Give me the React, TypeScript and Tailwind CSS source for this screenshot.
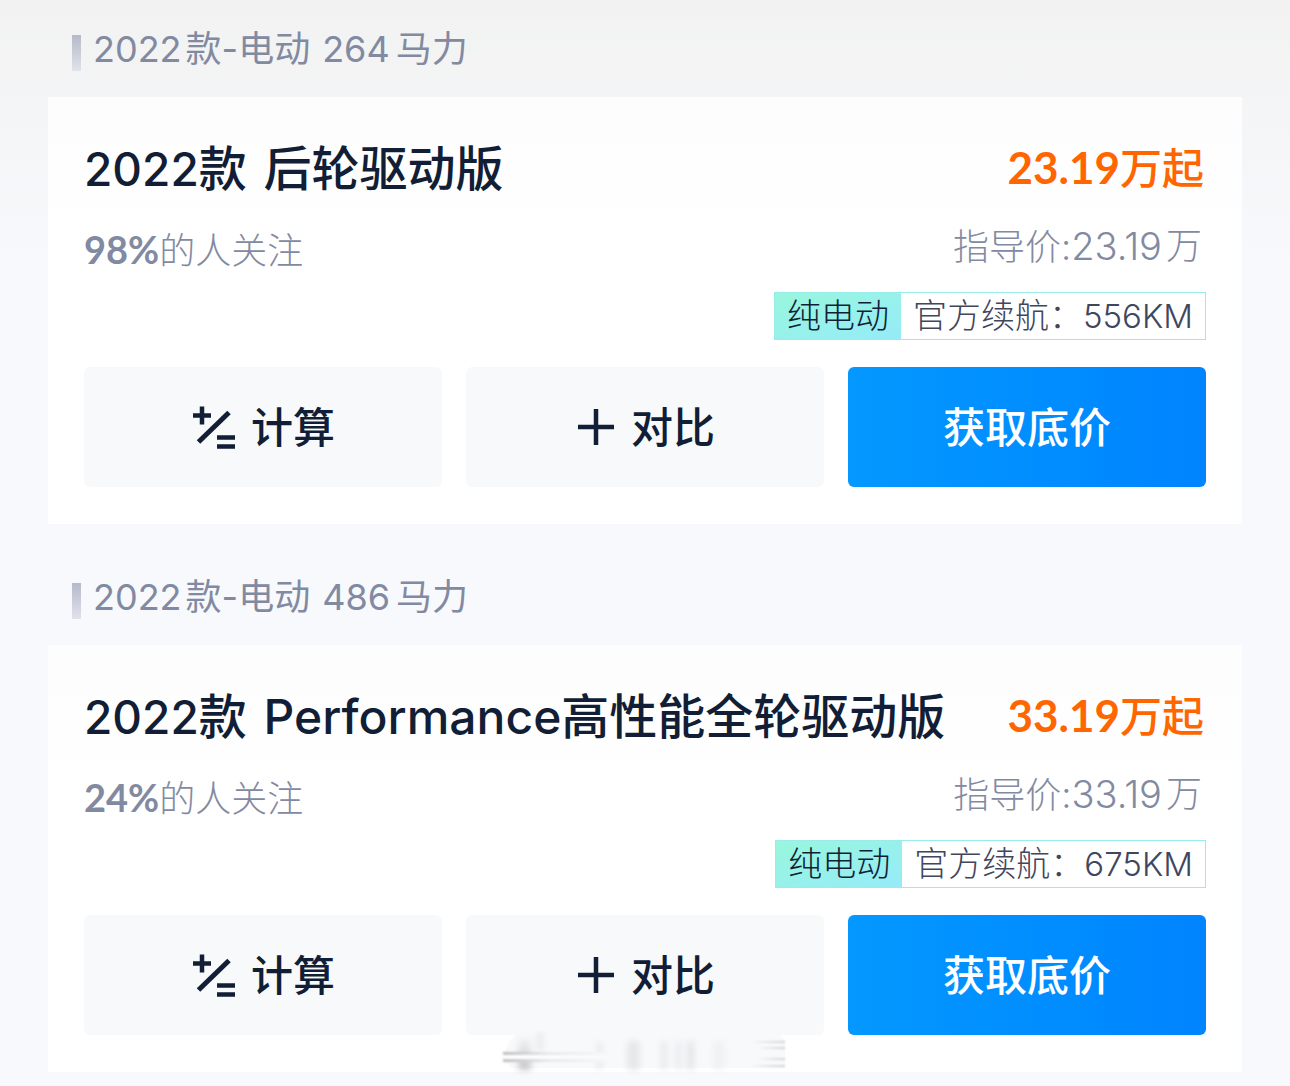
import React from 'react';

const models = [
  { power: '264', name: '后轮驱动版', price: '23.19', follow: '98%', range: '556KM' },
  { power: '486', name: 'Performance高性能全轮驱动版', price: '33.19', follow: '24%', range: '675KM' },
];

function CalcIcon() {
  return (
    <svg className="h-11 w-11" viewBox="0 0 44 44" fill="none" stroke="currentColor" strokeWidth="4.5" aria-hidden="true">
      <path d="M2 10.500h18M11 1.500v18M26 32.500h18M26 41.500h18" />
      <path d="M7.500 37L38 7.500" strokeWidth="5" />
    </svg>
  );
}

function PlusIcon() {
  return (
    <svg className="h-10 w-10" viewBox="0 0 40 40" fill="none" stroke="currentColor" strokeWidth="4.5" aria-hidden="true">
      <path d="M3 20h36M21 2v36" />
    </svg>
  );
}

// soft grey smear lying over the bottom edge of the list
function Smudge() {
  return (
    <svg
      className="pointer-events-none absolute bottom-2 left-1/2 h-12 w-75 -translate-x-1/2"
      viewBox="0 0 300 48"
      aria-hidden="true"
    >
      <defs>
        <filter id="soft" x="-20%" y="-20%" width="140%" height="140%">
          <feGaussianBlur stdDeviation="3" />
        </filter>
        <filter id="fine" x="-5%" y="-200%" width="110%" height="500%">
          <feGaussianBlur stdDeviation="1" />
        </filter>
        <linearGradient id="fadeRight">
          <stop offset="0" stopColor="#bcbcbc" />
          <stop offset="0.4" stopColor="#e8e8ea" />
          <stop offset="1" stopColor="#f8f9fb" />
        </linearGradient>
        <linearGradient id="fadeWhite">
          <stop offset="0" stopColor="#fff" />
          <stop offset="1" stopColor="#f8f9fb" />
        </linearGradient>
        <linearGradient id="fadeLeft">
          <stop offset="0" stopColor="#f8f9fb" />
          <stop offset="1" stopColor="#d2d2d2" />
        </linearGradient>
        <linearGradient id="fadeDown" x2="0" y2="1">
          <stop offset="0" stopColor="#f2f3f5" />
          <stop offset="1" stopColor="#c4c4c6" />
        </linearGradient>
      </defs>
      <path d="M22 4H284L290 10V38H16L8 28L14 12Z" fill="#f8f9fb" />
      <g filter="url(#soft)" fill="#e4e5e7">
        <rect x="23" y="8" width="13" height="32" fill="url(#fadeDown)" />
        <rect x="42" y="3" width="6" height="18" opacity="0.8" />
        <rect x="102" y="12" width="5" height="28" opacity="0.8" />
        <rect x="132" y="11" width="13" height="29" opacity="0.9" />
        <rect x="166" y="11" width="6" height="29" opacity="0.8" />
        <rect x="181" y="11" width="5" height="29" opacity="0.8" />
        <rect x="192" y="11" width="7" height="29" />
        <rect x="218" y="11" width="12" height="29" opacity="0.4" />
      </g>
      <g filter="url(#fine)">
        <rect x="8" y="22" width="110" height="3" fill="url(#fadeRight)" />
        <rect x="7" y="25" width="110" height="4" fill="url(#fadeWhite)" />
        <rect x="8" y="29" width="110" height="3" fill="url(#fadeRight)" />
        <rect x="255" y="11" width="35" height="2" fill="url(#fadeLeft)" />
        <rect x="262" y="17" width="28" height="2" fill="url(#fadeLeft)" />
        <rect x="262" y="28" width="28" height="2" fill="url(#fadeLeft)" />
        <rect x="255" y="35" width="35" height="2" fill="url(#fadeLeft)" />
      </g>
    </svg>
  );
}

export default function App() {
  return (
    <main className="relative min-h-screen bg-[#f7f9fc] bg-linear-to-b from-[#f2f2f2] to-[#f7f9fc] to-25% px-12 pb-3 font-[Inter,'Noto_Sans_CJK_SC',sans-serif] text-[#111e36]">
      {models.map((m) => (
        <section key={m.name} className="not-first:mt-6">
          <h2 className="flex h-[97px] items-center gap-1 px-6 text-4xl text-[#828aa2]">
            <span className="mt-2 mr-2 h-9 w-[9px] bg-linear-to-b from-[#b6b9c8] to-[#e0e3ec]" />
            <span>2022</span>
            <span>款-电动</span>
            <span className="mr-0.5 ml-2">{m.power}</span>
            <span>马力</span>
          </h2>

          <div className="bg-linear-to-b from-[#fdfdfd] to-white to-40% p-9 pb-[37px]">
            <div className="flex h-[72px] items-start justify-between">
              <h3 className="text-5xl leading-[72px] font-medium">
                <span className="text-[46px]">2022</span>
                <span className="mr-1">款</span> {m.name}
              </h3>
              <p className="pr-[2px] text-[42px] leading-[68px] font-medium text-[#ff6600]">
                <span className="font-[Lato] text-[44px] font-bold">{m.price}</span>万起
              </p>
            </div>
            <div className="flex h-[87px] justify-between text-4xl font-light text-[#828aa2]">
              <p className="leading-[88px]">
                <b className="font-[Lato] text-[38px] font-bold">{m.follow}</b>的人关注
              </p>
              <p className="flex gap-1 pr-1 leading-[82px]">
                <span>
                  指导价:<span className="text-[38px]">{m.price}</span>
                </span>
                <span>万</span>
              </p>
            </div>

            {/* Autonomie */}
            <div className="ml-auto flex h-12 w-fit border border-[#9aecec] text-[34px] leading-[46px] font-light">
              <span className="bg-linear-to-br from-[#98f7dc] to-[#96ebf8] px-3">纯电动</span>
              <span className="bg-white px-3 text-[#40465c]">
                官方续航：<span className="text-[33px]">{m.range}</span>
              </span>
            </div>

            <div className="mt-[27px] grid grid-cols-3 gap-6 text-[42px] font-medium">
              <button className="flex h-30 items-center justify-center gap-4 rounded-md bg-[#f7f9fb]">
                <CalcIcon />计算
              </button>
              <button className="flex h-30 items-center justify-center gap-4 rounded-md bg-[#f7f9fb]">
                <PlusIcon />对比
              </button>
              <button className="h-30 rounded-md bg-linear-to-r from-[#0598ff] to-[#0084ff] text-white">获取底价</button>
            </div>
          </div>
        </section>
      ))}
      <Smudge />
    </main>
  );
}
